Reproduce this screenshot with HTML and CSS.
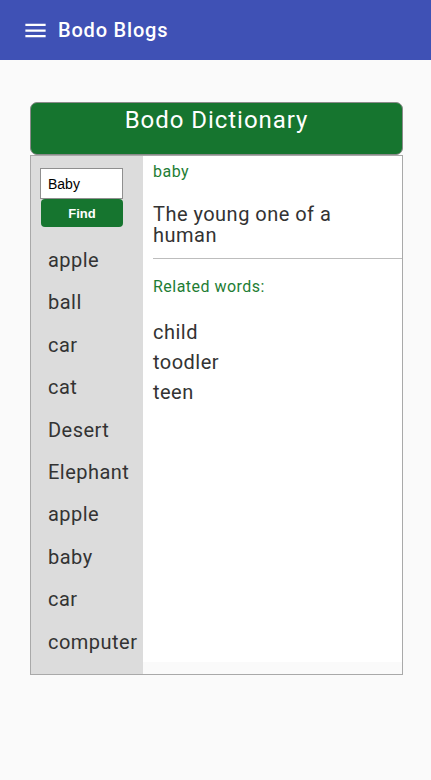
FILE: index.html
```html
<!DOCTYPE html>
<html>
<head>
<meta charset="utf-8">
<link rel="stylesheet" href="styles.css">
</head>
<body>
<header class="topbar">
  <svg class="menu-icon" viewBox="0 0 24 24" width="27" height="27"><path fill="#fff" d="M3 18h18v-2H3v2zm0-5h18v-2H3v2zm0-7v2h18V6H3z"/></svg>
  <span class="brand">Bodo Blogs</span>
</header>
<main class="page">
  <div class="dict-title">Bodo Dictionary</div>
  <div class="dict-box">
    <aside class="sidebar">
      <input class="search" type="text" value="Baby">
      <button class="find">Find</button>
      <ul class="words">
        <li>apple</li>
        <li>ball</li>
        <li>car</li>
        <li>cat</li>
        <li>Desert</li>
        <li>Elephant</li>
        <li>apple</li>
        <li>baby</li>
        <li>car</li>
        <li>computer</li>
      </ul>
    </aside>
    <section class="content">
      <div class="word">baby</div>
      <div class="meaning">The young one of a human</div>
      <hr class="sep">
      <div class="related-label">Related words:</div>
      <ul class="related">
        <li>child</li>
        <li>toodler</li>
        <li>teen</li>
      </ul>
    </section>
  </div>
</main>
</body>
</html>
```
FILE: styles.css
```css
* { box-sizing: border-box; }
html, body { margin: 0; padding: 0; }
body {
  background: #fafafa;
  font-family: Roboto, "Liberation Sans", sans-serif;
  letter-spacing: 0.03em;
  width: 431px;
  height: 780px;
}
.topbar {
  height: 60px;
  background: #3f51b5;
  display: flex;
  align-items: center;
  padding-left: 22px;
  color: #fff;
}
.menu-icon { display: block; margin-top: 1px; }
.brand {
  margin-left: 9px;
  font-size: 20px;
  font-weight: 500;
  letter-spacing: 0.04em;
}
.page {
  padding: 42px 28px 0 30px;
}
.dict-title {
  width: 373px;
  height: 53px;
  background: #16752f;
  border: 1px solid #8a8a8a;
  border-radius: 7px;
  color: #fff;
  font-size: 24px;
  letter-spacing: 0.04em;
  text-align: center;
  line-height: 34px;
}
.dict-box {
  width: 373px;
  height: 520px;
  border: 1px solid #a9a9a9;
  display: flex;
  align-items: flex-start;
}
.sidebar {
  width: 112px;
  align-self: stretch;
  background: #dcdcdc;
  padding: 12px 0 0 9px;
}
.search {
  display: block;
  width: 83px;
  height: 31px;
  border: 1px solid #8f8f8f;
  background: #fff;
  font-family: Arial, "Liberation Sans", sans-serif;
  letter-spacing: 0;
  font-size: 14px;
  padding: 0 7px;
  margin: 0;
  color: #000;
}
.find {
  display: block;
  width: 82px;
  height: 28px;
  margin: 0 0 0 1px;
  background: #16752f;
  border: 0;
  border-radius: 4px;
  color: #fff;
  font-family: Arial, "Liberation Sans", sans-serif;
  letter-spacing: 0;
  font-weight: bold;
  font-size: 13px;
}
.words {
  list-style: none;
  margin: 9px 0 0 0;
  padding: 0 0 0 8px;
}
.words li {
  font-size: 20px;
  color: #333;
  height: 42.4px;
  line-height: 49px;
  white-space: nowrap;
}
.content {
  flex: 1;
  height: 506px;
  background: #fff;
  padding: 5px 0 0 10px;
}
.word {
  color: #1e7d34;
  font-size: 16px;
  line-height: 22px;
}
.meaning {
  margin-top: 21px;
  font-size: 20px;
  line-height: 21px;
  color: #333;
  width: 205px;
}
.sep {
  margin: 12px 0 0 0;
  border: 0;
  border-top: 1px solid #bdbdbd;
  height: 0;
}
.related-label {
  margin-top: 17px;
  color: #1e7d34;
  font-size: 16px;
  line-height: 22px;
}
.related {
  list-style: none;
  margin: 19px 0 0 0;
  padding: 0;
}
.related li {
  font-size: 20px;
  color: #333;
  line-height: 30px;
}
```
